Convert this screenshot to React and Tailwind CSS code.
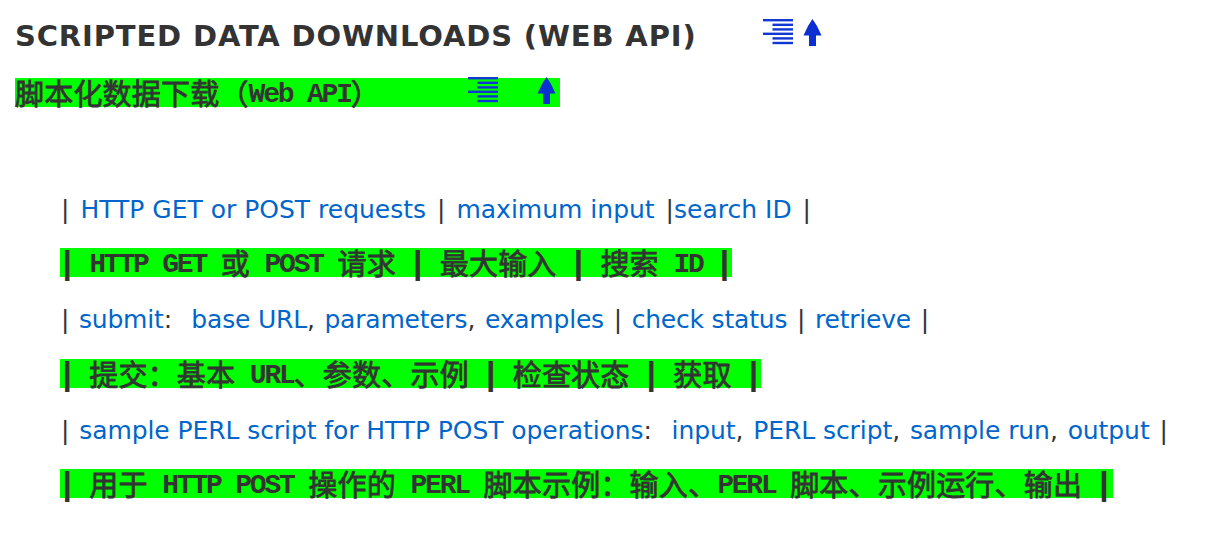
const Z = ({ children }) => (
  <span className="text-[29px] leading-none font-normal tracking-[0.2px] [-webkit-text-stroke:0.8px_#333] font-['Noto_Sans_CJK_SC',sans-serif]">{children}</span>
);

const P = () => (
  <span className="text-[34px] leading-none tracking-[-5.8px] align-[1px] ml-[-3px] mr-[3px]">|</span>
);

const M = ({ children }) => <span className="align-[3px] text-[28px] tracking-[-2.2px]">{children}</span>;

const Indent = ({ className = "" }) => (
  <svg viewBox="0 0 30 26" className={`w-[30px] h-[26px] ${className}`}>
    <g fill="#1238d4">
      <rect x="0" y="0" width="30" height="2.4" />
      <rect x="9.5" y="4.6" width="20.5" height="2.4" />
      <rect x="9.5" y="9.2" width="20.5" height="2.4" />
      <rect x="0" y="13.6" width="30" height="2.4" />
      <rect x="9.5" y="18.2" width="20.5" height="2.4" />
      <rect x="9.5" y="22.8" width="20.5" height="2.4" />
    </g>
  </svg>
);

const Arrow = ({ className = "" }) => (
  <svg viewBox="0 0 19 27" className={`w-[19px] h-[27px] ${className}`}>
    <path d="M9.5 0 L14 7 L18.5 16.5 L13 16.5 L13 27 L6 27 L6 16.5 L0.5 16.5 L5 7 Z" fill="#0b2fd0" />
  </svg>
);

const Bar = ({ children, className = "" }) => (
  <div className={`inline-block self-start h-[29px] leading-[29px] whitespace-pre bg-[#00ff00] text-[#333] font-bold text-[26px] tracking-[-1px] font-['Liberation_Mono',monospace] ${className}`}>
    {children}
  </div>
);

const L = ({ children }) => <a href="#" className="text-[#0066cc] [word-spacing:0px]">{children}</a>;

const Row = ({ children, className = "" }) => (
  <p className={`h-[29px] leading-[29px] whitespace-pre text-[#333] text-[25px] font-['DejaVu_Sans',sans-serif] ${className}`}>{children}</p>
);

export default function App() {
  return (
    <div className="w-[1209px] h-[543px] overflow-hidden bg-white px-[15px] pt-[18px]">
      <div className="flex items-start">
        <h1 className="h-[36px] leading-[36px] text-[29px] tracking-[0.85px] font-bold text-[#333] whitespace-pre font-['DejaVu_Sans',sans-serif]">SCRIPTED DATA DOWNLOADS (WEB API)</h1>
        <Indent className="ml-[67px] mt-[1px]" />
        <Arrow className="ml-[10px] mt-[1px]" />
      </div>
      <Bar className="mt-[24px] !flex w-[545px] items-start">
        <span><Z>脚本化数据下载（</Z><M>Web API</M><Z>）</Z></span>
        <Indent className="absolute ml-[453px] -mt-[1px]" />
        <Arrow className="absolute ml-[522px] -mt-[1px]" />
      </Bar>
      <div className="mt-[88px] pl-[45px] flex flex-col gap-[28px]">
        <div className="flex flex-col gap-[24px]">
          <Row className="pl-[1px] [word-spacing:3px]">| <L>HTTP GET or POST requests</L> | <L>maximum input</L> |<L>search ID</L> |</Row>
          <Bar><P /> <M>HTTP GET</M> <Z>或</Z> <M>POST</M> <Z>请求</Z> <P /> <Z>最大输入</Z> <P /> <Z>搜索</Z> <M>ID</M> <P /></Bar>
        </div>
        <div className="flex flex-col gap-[25px]">
          <Row className="pl-[1px] [word-spacing:2px] tracking-[-0.2px]">| <L>submit</L>:  <L>base URL</L>, <L>parameters</L>, <L>examples</L> | <L>check status</L> | <L>retrieve</L> |</Row>
          <Bar><P /> <Z>提交：基本</Z> <M>URL</M><Z>、参数、示例</Z> <P /> <Z>检查状态</Z> <P /> <Z>获取</Z> <P /></Bar>
        </div>
        <div className="flex flex-col gap-[24px]">
          <Row className="pl-[1px] [word-spacing:2px] tracking-[-0.08px]">| <L>sample PERL script for HTTP POST operations</L>:  <L>input</L>, <L>PERL script</L>, <L>sample run</L>, <L>output</L> |</Row>
          <Bar className="pr-[2px]"><P /> <Z>用于</Z> <M>HTTP POST</M> <Z>操作的</Z> <M>PERL</M> <Z>脚本示例：输入、</Z><M>PERL</M> <Z>脚本、示例运行、输出</Z> <P /></Bar>
        </div>
      </div>
    </div>
  );
}
